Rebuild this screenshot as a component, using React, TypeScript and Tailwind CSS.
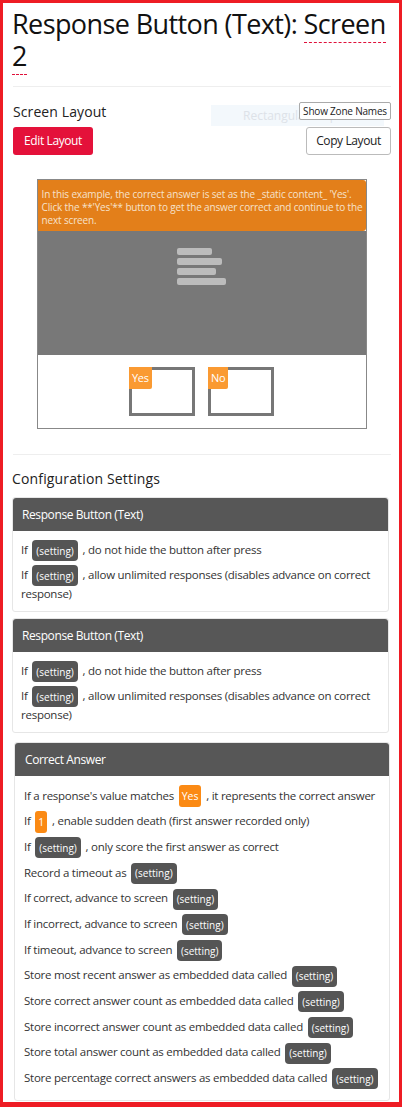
const Setting = () => (
  <span className="mx-[2px] -my-[3px] inline-flex h-[21px] items-center rounded-[4px] bg-[#555] px-[4px] align-middle text-[10px] leading-none tracking-normal text-white">
    (setting)
  </span>
);

const Val = ({ children }: { children: string }) => (
  <span className="mx-[2px] -my-[3.5px] inline-flex h-[22px] items-center rounded-[3px] bg-[#fb8a14] px-[3px] align-middle text-[10.5px] leading-none tracking-normal text-white">
    {children}
  </span>
);

const Row = ({ children, className = "mb-[6px]" }: { children: React.ReactNode; className?: string }) => (
  <div className={`text-[11.5px] leading-[19px] tracking-[-0.25px] text-[#333] last:mb-0 ${className}`}>
    {children}
  </div>
);

const Card = ({
  title,
  children,
  className = "",
  head = "px-[9px]",
  body = "px-[8px] pt-[9px] pb-[8px]",
}: {
  title: string;
  children: React.ReactNode;
  className?: string;
  head?: string;
  body?: string;
}) => (
  <div className={`rounded-[3px] border border-[#e6e6e6] ${className}`}>
    <div
      className={`flex h-[33px] items-center rounded-t-[3px] bg-[#575757] text-[12px] tracking-[-0.4px] text-white ${head}`}
    >
      {title}
    </div>
    <div className={body}>{children}</div>
  </div>
);

const ButtonSettings = () => (
  <>
    <Row>
      If <Setting /> , do not hide the button after press
    </Row>
    <Row>
      If <Setting /> , allow unlimited responses (disables advance on correct response)
    </Row>
  </>
);

const R = ({ children }: { children: React.ReactNode }) => <Row className="mb-[6.7px]">{children}</Row>;

export default function App() {
  return (
    <div className="min-h-[1107px] w-[402px] border-[3px] border-b-[5px] border-[#ee1c24] bg-white pr-[8px] pl-[9px] font-['Open_Sans',sans-serif] text-[#222]">
      <h1 className="mt-[5px] text-[27px] leading-[32px] font-normal tracking-[-0.6px] text-[#111]">
        Response Button (Text):{" "}
        <span className="border-b border-dashed border-[#e0103a]">Screen 2</span>
      </h1>

      <div className="mt-[14px] ml-[1px] border-t border-[#eee]" />

      {/* Screen layout */}
      <div className="relative mt-[13px] ml-[1px]">
        <div className="absolute top-[5px] left-[198px] flex h-[21px] w-[173px] items-center bg-[#f3f8fc] pl-[32px] text-[12px] text-[#dde2e8]">
          Rectangular Ship
        </div>
        <div className="relative flex h-[22px] items-center justify-between">
          <span className="text-[14px] tracking-[0.1px] text-[#222]">Screen Layout</span>
          <button className="h-[18px] w-[92px] rounded-[2px] border border-[#aaa] bg-white text-[10px] leading-none tracking-[-0.2px] text-[#222]">
            Show Zone Names
          </button>
        </div>
        <div className="relative mt-[5px] flex items-center justify-between">
          <button className="h-[28px] w-[80px] rounded-[3px] bg-[#e4113a] text-[12px] tracking-[-0.4px] text-white">
            Edit Layout
          </button>
          <button className="h-[28px] w-[85px] rounded-[3px] border border-[#bbb] bg-white text-[12px] tracking-[-0.4px] text-[#222]">
            Copy Layout
          </button>
        </div>
      </div>

      {/* Preview */}
      <div className="mx-auto mt-[24px] w-[330px] border border-[#888]">
        <div className="rounded-r-[3px] bg-[#e37f1a] pt-[8px] pr-[2px] pb-[4px] pl-[4px] text-[10px] leading-[13px] tracking-[-0.15px] text-[#f6e2cc]">
          In this example, the correct answer is set as the _static content_ 'Yes'. Click the **'Yes'** button to get the answer correct and continue to the next screen.
        </div>
        <div className="h-[124px] bg-[#787878] pt-[17px]">
          <div className="mx-auto flex w-[49px] flex-col gap-[3px]">
            <div className="h-[7px] w-[35px] rounded-[2px] bg-[#bcbcbc]" />
            <div className="h-[7px] w-[45px] rounded-[2px] bg-[#bcbcbc]" />
            <div className="h-[7px] w-[39px] rounded-[2px] bg-[#bcbcbc]" />
            <div className="h-[7px] w-[49px] rounded-[2px] bg-[#bcbcbc]" />
          </div>
        </div>
        <div className="flex h-[73px] justify-center gap-[13px] pt-[12px]">
          {["Yes", "No"].map((t) => (
            <div key={t} className="relative h-[49px] w-[66px] border-[3px] border-[#777]">
              <span className="absolute -top-[3px] -left-[3px] flex h-[22px] items-center rounded-br-[2px] bg-[#fa9a32] px-[3px] text-[11px] tracking-[-0.3px] text-white">
                {t}
              </span>
            </div>
          ))}
        </div>
      </div>

      <div className="mt-[25px] ml-[1px] border-t border-[#eee]" />

      <div className="mt-[14px] text-[14px] leading-[20px] tracking-[0.15px] text-[#222]">
        Configuration Settings
      </div>

      <Card title="Response Button (Text)" className="mt-[8px] mr-[2px]">
        <ButtonSettings />
      </Card>

      <Card title="Response Button (Text)" className="mt-[6px] mr-[2px]">
        <ButtonSettings />
      </Card>

      <Card
        title="Correct Answer"
        className="mt-[9px] mr-[1px] ml-[2px]"
        head="px-[10px]"
        body="px-[9px] pt-[9.5px] pb-[13px]"
      >
        <R>
          If a response's value matches <Val>Yes</Val> , it represents the correct answer
        </R>
        <R>
          If <Val>1</Val> , enable sudden death (first answer recorded only)
        </R>
        <R>
          If <Setting /> , only score the first answer as correct
        </R>
        <R>
          Record a timeout as <Setting />
        </R>
        <R>
          If correct, advance to screen <Setting />
        </R>
        <R>
          If incorrect, advance to screen <Setting />
        </R>
        <R>
          If timeout, advance to screen <Setting />
        </R>
        <R>
          Store most recent answer as embedded data called <Setting />
        </R>
        <R>
          Store correct answer count as embedded data called <Setting />
        </R>
        <R>
          Store incorrect answer count as embedded data called <Setting />
        </R>
        <R>
          Store total answer count as embedded data called <Setting />
        </R>
        <R>
          Store percentage correct answers as embedded data called <Setting />
        </R>
      </Card>
    </div>
  );
}
